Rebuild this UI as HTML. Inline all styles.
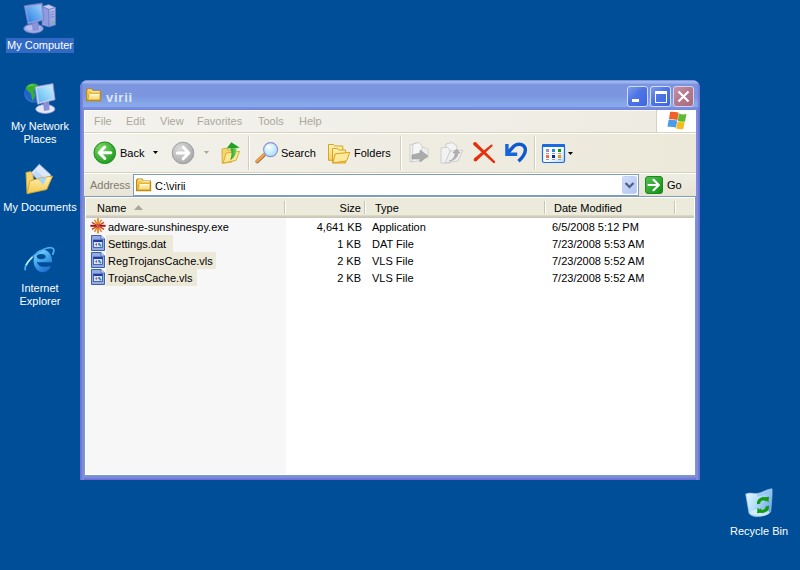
<!DOCTYPE html>
<html><head><meta charset="utf-8">
<style>
*{margin:0;padding:0;box-sizing:border-box}
html,body{width:800px;height:570px;overflow:hidden;background:#004E98;font-family:"Liberation Sans",sans-serif;font-size:11px;line-height:13px;position:relative}
.a{position:absolute}
.t{position:absolute;white-space:nowrap;font-size:11px;line-height:13px}
.dl{position:absolute;color:#fff;text-align:center;white-space:nowrap;width:80px;left:0}
svg{position:absolute;overflow:visible}
</style></head><body>

<!-- ============ desktop icons ============ -->
<!-- My Computer -->
<svg style="left:0;top:0" width="80" height="40">
  <defs>
    <linearGradient id="scr1" x1="0" y1="1" x2="1" y2="0"><stop offset="0" stop-color="#2E7EE0"/><stop offset="0.6" stop-color="#6AB0F2"/><stop offset="1" stop-color="#A8D4F8"/></linearGradient>
    <linearGradient id="twr" x1="0" y1="0" x2="0" y2="1"><stop offset="0" stop-color="#B4BEEC"/><stop offset="1" stop-color="#8E9ADC"/></linearGradient>
  </defs>
  <polygon points="42,6.5 48.5,4.5 55.5,7.5 49,9.5" fill="#C4CCF2" stroke="#6A78C8" stroke-width="0.6"/>
  <polygon points="42,6.5 49,9.5 49,27 42,25" fill="#8F9BDC" stroke="#6A78C8" stroke-width="0.6"/>
  <polygon points="49,9.5 55.5,7.5 55.5,25 49,27" fill="url(#twr)" stroke="#6A78C8" stroke-width="0.6"/>
  <path d="M50,12.5 L54.5,11.2 M50,15 L54.5,13.7 M50,17.5 L54.5,16.2" stroke="#7884CC" stroke-width="0.9"/>
  <rect x="52.8" y="21.5" width="1.6" height="1.6" fill="#3CE03C"/>
  <ellipse cx="33.5" cy="28.6" rx="9.8" ry="4.6" fill="#A0AAE4" stroke="#6E7CC8" stroke-width="0.7"/>
  <ellipse cx="33" cy="28" rx="7" ry="2.6" fill="#B8C0EE"/>
  <polygon points="32,21 38,20 38.5,29.5 33,30.5" fill="#8A94D8" stroke="#7080CC" stroke-width="0.5"/>
  <polygon points="24.2,5.8 42.2,3 43.8,20 28,24.3" fill="#94A2E2" stroke="#6876C6" stroke-width="0.7"/>
  <polygon points="26,7.3 40.8,4.9 42.2,18.8 28.7,22.4" fill="url(#scr1)"/>
</svg>
<div class="a" style="left:6px;top:38px;width:68px;height:15px;background:#316AC5"></div>
<div class="dl" style="top:39px">My Computer</div>

<!-- My Network Places -->
<svg style="left:0;top:78px" width="80" height="40">
  <defs>
    <radialGradient id="glb" cx="0.55" cy="0.45" r="0.6"><stop offset="0" stop-color="#2A6ED8"/><stop offset="0.8" stop-color="#1E5EC8"/><stop offset="1" stop-color="#5AB0F0"/></radialGradient>
    <linearGradient id="scr2" x1="0" y1="1" x2="1" y2="0"><stop offset="0" stop-color="#58B6F2"/><stop offset="1" stop-color="#C8F0FE"/></linearGradient>
  </defs>
  <circle cx="33.5" cy="15" r="9.4" fill="url(#glb)" stroke="#1A4AA0" stroke-width="0.5"/>
  <path d="M25.8,10 C27,7 30,5.6 34,5.6 C36,5.8 37.5,6.5 38,7.5 L37.5,11 C36.5,12.5 35,12.2 34,12.6 C33,13 33.5,14.5 34.5,15.5 C35.5,16.8 35,19 33.8,20.5 C33,21.5 32.8,22.5 32.5,23.5 C31.8,21 31.5,18.5 31.2,16.8 C30.8,15 29.5,14.2 28.5,13.5 C27.3,12.8 26.5,11.5 25.8,10 Z" fill="#36B030"/>
  <path d="M28,8.5 C30,7 32,6.8 34,7.2" fill="none" stroke="#8EE070" stroke-width="1" opacity="0.8"/>
  <ellipse cx="45.3" cy="31" rx="9.6" ry="4.4" fill="#E4E8F4" stroke="#A4AAD4" stroke-width="0.7"/>
  <polygon points="43,24 49,23 49.5,32 44,33" fill="#8C8ED8"/>
  <polygon points="35.1,8.8 53,5.6 55.1,21.8 37.5,26.3" fill="#CDD0F0" stroke="#9096D4" stroke-width="0.7"/>
  <polygon points="36.8,10.2 51.5,7.5 53.4,20.6 39.1,24.6" fill="url(#scr2)"/>
</svg>
<div class="dl" style="top:120px">My Network<br>Places</div>

<!-- My Documents -->
<svg style="left:0;top:160px" width="80" height="40">
  <defs>
    <linearGradient id="fld" x1="0" y1="0" x2="0" y2="1"><stop offset="0" stop-color="#FFF0B0"/><stop offset="1" stop-color="#F2C850"/></linearGradient>
  </defs>
  <polygon points="26,12.5 31,11.5 33,14 34,30 27,33" fill="#F3D372" stroke="#D8A830" stroke-width="0.8"/>
  <polygon points="39.3,4.2 50.9,15 42.5,25.3 31.6,12.6" fill="#DCE8FA" stroke="#A8C0E8" stroke-width="0.8"/>
  <polygon points="36,10 46,19 42,24 33,15" fill="#B8D0F4" opacity="0.7"/>
  <polygon points="29.8,21 40.4,18 52.6,16 46.7,29.5 27,33.7" fill="url(#fld)" stroke="#D4A428" stroke-width="0.9"/>
  <polygon points="38,19 47,17 43,25" fill="#A8D4F4"/>
</svg>
<div class="dl" style="top:201px">My Documents</div>

<!-- Internet Explorer -->
<svg style="left:0;top:240px" width="80" height="40">
  <defs>
    <linearGradient id="ie" x1="0.2" y1="0" x2="0.7" y2="1"><stop offset="0" stop-color="#8ADAFA"/><stop offset="0.45" stop-color="#44A8EE"/><stop offset="1" stop-color="#1C6ACC"/></linearGradient>
  </defs>
  <ellipse cx="42.8" cy="21" rx="9.3" ry="11.3" fill="url(#ie)"/>
  <ellipse cx="41.2" cy="16.6" rx="4.4" ry="2.7" fill="#004E98"/>
  <path d="M36.8,22.2 L53,22.2 L53,25.6 C50,26.5 46,27 42.5,26.8 C40,26.6 38,24.8 36.8,22.2 Z" fill="#004E98"/>
  <g transform="translate(39.5,19.5) rotate(-38)">
    <path d="M-17.5,0 A17.5,6.5 0 0 1 17.5,0 A17.5,6.5 0 0 1 13,4.3" fill="none" stroke="#48AEF2" stroke-width="1.8"/>
    <path d="M-14,-3.8 A17.5,6.5 0 0 1 -4,-6.3" fill="none" stroke="#C4F0FE" stroke-width="1.6"/>
  </g>
</svg>
<div class="dl" style="top:282px">Internet<br>Explorer</div>

<!-- Recycle Bin -->
<svg style="left:720px;top:484px" width="80" height="40">
  <defs>
    <linearGradient id="bin" x1="0" y1="0" x2="1" y2="0.6"><stop offset="0" stop-color="#E8FAFE"/><stop offset="0.5" stop-color="#B8E0FA"/><stop offset="1" stop-color="#6EA8E8"/></linearGradient>
  </defs>
  <path d="M25.7,10 C30,8 33,10 37,9.5 C42,9 47,5 52,4.7 C52.5,10 51.5,20 50.7,28 C47,31 41,33 36,32.7 C33,32.5 30,31 29,29.3 Z" fill="url(#bin)" stroke="#9CC4EC" stroke-width="0.6"/>
  <path d="M37,10 C42,9.5 47,6 51.5,5.5 L50.5,9 C46,10 42,12 37.5,12.5 Z" fill="#8EC0EE" opacity="0.6"/>
  <ellipse cx="40" cy="28.5" rx="9.5" ry="3.6" fill="#E0F4FE" opacity="0.75"/>
  <path d="M38.6,20 A4.6,4.6 0 0 1 46.8,16.6" fill="none" stroke="#139A13" stroke-width="3.2"/>
  <path d="M47.4,22 A4.6,4.6 0 0 1 39.2,25.4" fill="none" stroke="#139A13" stroke-width="3.2"/>
  <polygon points="44.2,13.5 49,12.8 48.4,18.6" fill="#139A13"/>
  <polygon points="41.8,28.5 37,29.2 37.6,23.4" fill="#139A13"/>
</svg>
<div class="dl" style="left:719px;top:525px">Recycle Bin</div>

<!-- ============ window ============ -->
<div class="a" style="left:80px;top:80px;width:620px;height:400px;border-radius:8px 8px 0 0;overflow:hidden;background:linear-gradient(90deg,#6F6FD5 0,#6F6FD5 1px,#7579D8 1px,#7579D8 2px,#7B8BDC 2px,#7B8BDC 3px,#7A8EDE 3px,#7A8EDE 617px,#7B8BDC 617px,#7B8BDC 618px,#7579D8 618px,#7579D8 619px,#6F6FD5 619px)">
  <!-- title bar -->
  <div class="a" style="left:0;top:0;width:620px;height:30px;background:linear-gradient(180deg,#7C93DE 0,#7C93DE 1px,#A3B8EE 1px,#98B0EA 3px,#7B96DF 4.5px,#7B96DF 16px,#84A4E8 22px,#88AAEC 26.5px,#7A8FE0 27.5px,#7385DA 30px)"></div>
  <div class="a" style="left:0;top:0;width:3px;height:30px;background:linear-gradient(90deg,#6F6FD5,#7A8EDE)"></div>
  <div class="a" style="left:617px;top:0;width:3px;height:30px;background:linear-gradient(90deg,rgba(122,142,222,0),#6F6FD5)"></div>
</div>
<div class="a" style="left:84px;top:476px;width:612px;height:4px;background:linear-gradient(180deg,#7A8EDE 0,#7A8EDE 1px,#7B8BDC 1px,#7B8BDC 2px,#7579D8 2px,#7579D8 3px,#6F6FD5 3px)"></div>
<!-- title folder -->
<svg style="left:86px;top:88px" width="16" height="15">
  <defs><linearGradient id="tf" x1="0" y1="0" x2="0" y2="1"><stop offset="0" stop-color="#FFF6C0"/><stop offset="1" stop-color="#F6D468"/></linearGradient></defs>
  <path d="M0.6,2 L1.6,1 L6,1 L7,3 L14.2,3 L14.6,4 L14.6,12.6 L0.6,12.6 Z" fill="#F2C848" stroke="#B8860E" stroke-width="1.1"/>
  <path d="M1.8,2 L5.8,2 L6.4,3.6 L13.6,3.6" fill="none" stroke="#FFF6C8" stroke-width="0.9"/>
  <path d="M3.3,6 L14,6 L14,12 L1.6,12 Z" fill="url(#tf)" stroke="#C89418" stroke-width="0.7"/>
  <path d="M3.6,6.5 L13.5,6.5" stroke="#fff" stroke-width="0.9"/>
</svg>
<div class="a" style="left:106px;top:90px;color:#DCE6F8;font-weight:bold;font-size:13px;line-height:16px;letter-spacing:0.75px">virii</div>

<!-- caption buttons -->
<div class="a" style="left:627px;top:86px;width:21px;height:21px;border:1px solid #D2DCF6;border-radius:3px;background:linear-gradient(135deg,#7C9AEC 0,#4E74E4 45%,#3E66E2 100%)"></div>
<div class="a" style="left:632px;top:99px;width:7px;height:3px;background:#fff"></div>
<div class="a" style="left:650px;top:86px;width:21px;height:21px;border:1px solid #D2DCF6;border-radius:3px;background:linear-gradient(135deg,#7C9AEC 0,#4E74E4 45%,#3E66E2 100%)"></div>
<div class="a" style="left:655px;top:91px;width:12px;height:12px;border:1px solid #fff;border-top-width:3px"></div>
<div class="a" style="left:673px;top:86px;width:21px;height:21px;border:1px solid #D8D0E8;border-radius:3px;background:linear-gradient(135deg,#C890A8 0,#B47A90 45%,#A86C82 100%)"></div>
<svg style="left:673px;top:86px" width="21" height="21"><path d="M5.5,5.5 L15.5,15.5 M15.5,5.5 L5.5,15.5" stroke="#fff" stroke-width="2.2"/></svg>

<!-- menu bar -->
<div class="a" style="left:84px;top:110px;width:572px;height:22px;background:linear-gradient(90deg,#F3F2EE,#EEECE2);border-top:1px solid #FAFAF6;border-left:1px solid #fff"></div>
<div class="a" style="left:84px;top:132px;width:612px;height:1px;background:#D8D2BD"></div>
<div class="a" style="left:656px;top:110px;width:1px;height:22px;background:#D8D2BD"></div>
<div class="a" style="left:657px;top:110px;width:39px;height:22px;background:#fff"></div>
<svg style="left:656px;top:108px" width="40" height="24">
  <path d="M14,4 C16,3.5 19,3.8 22.5,4.5 L21.5,12 C18,11.3 15.5,11 13,11.3 Z" fill="#F0602A"/>
  <path d="M22.8,5.5 C25,6.3 28,6.8 30.5,6 L29,13.5 C26.5,14.2 24,13.8 21.8,13 Z" fill="#5EBA2E"/>
  <path d="M12.6,11.8 C15,11.5 18,11.8 21.2,12.5 L20,19.5 C17,18.8 14.5,18.5 11.5,18.8 Z" fill="#4A9CE8"/>
  <path d="M21.6,13.5 C24,14.3 26.5,14.6 28.8,14 L27.2,21 C25,21.6 22.5,21.3 20.2,20.5 Z" fill="#F5BC1C"/>
</svg>
<div class="t" style="left:94px;top:115px;color:#ACA899">File</div>
<div class="t" style="left:126px;top:115px;color:#ACA899">Edit</div>
<div class="t" style="left:160px;top:115px;color:#ACA899">View</div>
<div class="t" style="left:197px;top:115px;color:#ACA899">Favorites</div>
<div class="t" style="left:258px;top:115px;color:#ACA899">Tools</div>
<div class="t" style="left:299px;top:115px;color:#ACA899">Help</div>

<!-- toolbar -->
<div class="a" style="left:84px;top:133px;width:612px;height:40px;background:linear-gradient(90deg,#F2F1EB,#ECE9DA);border-top:1px solid #fff"></div>
<div class="a" style="left:248px;top:136px;width:1px;height:34px;background:#D2CEBC"></div>
<div class="a" style="left:249px;top:136px;width:1px;height:34px;background:#fff"></div>
<div class="a" style="left:400px;top:136px;width:1px;height:34px;background:#D2CEBC"></div>
<div class="a" style="left:401px;top:136px;width:1px;height:34px;background:#fff"></div>
<div class="a" style="left:534px;top:136px;width:1px;height:34px;background:#D2CEBC"></div>
<div class="a" style="left:535px;top:136px;width:1px;height:34px;background:#fff"></div>

<!-- back -->
<svg style="left:93px;top:141px" width="24" height="24">
  <defs><radialGradient id="gb" cx="0.35" cy="0.3" r="0.8"><stop offset="0" stop-color="#84D868"/><stop offset="0.6" stop-color="#40B038"/><stop offset="1" stop-color="#1A9A1A"/></radialGradient></defs>
  <circle cx="11.75" cy="11.75" r="10.8" fill="url(#gb)" stroke="#1E8E1E" stroke-width="1"/>
  <path d="M11.8,6 L6.2,11.75 L11.8,17.5 M7,11.75 L17.8,11.75" fill="none" stroke="#fff" stroke-width="3" stroke-linecap="round" stroke-linejoin="round"/>
</svg>
<div class="t" style="left:120px;top:147px">Back</div>
<svg style="left:153px;top:151px" width="5" height="3"><path d="M0,0 H5 L2.5,3 Z" fill="#000"/></svg>
<!-- forward -->
<svg style="left:171px;top:141px" width="24" height="24">
  <defs><radialGradient id="gg" cx="0.35" cy="0.3" r="0.75"><stop offset="0" stop-color="#DADADA"/><stop offset="1" stop-color="#A8A8A8"/></radialGradient></defs>
  <circle cx="12" cy="12" r="10.8" fill="url(#gg)" stroke="#A0A0A0" stroke-width="1"/>
  <path d="M12.2,6.2 L17.8,12 L12.2,17.8 M17,12 L6.2,12" fill="none" stroke="#fff" stroke-width="3" stroke-linecap="round" stroke-linejoin="round"/>
</svg>
<svg style="left:204px;top:151px" width="5" height="3"><path d="M0,0 H5 L2.5,3 Z" fill="#ACA899"/></svg>
<!-- up -->
<svg style="left:220px;top:141px" width="22" height="24">
  <defs><linearGradient id="upg" x1="0" y1="0" x2="1" y2="0"><stop offset="0" stop-color="#1E9A1E"/><stop offset="1" stop-color="#7ADC5A"/></linearGradient></defs>
  <path d="M2,8 L6.5,7.2 L8,9 L12,9 L12,21 L2.2,22.3 Z" fill="#F4D670" stroke="#D8A828" stroke-width="0.9"/>
  <path d="M6,12 L19.6,10.4 L16,19.4 L3.2,22 Z" fill="#FBE69A" stroke="#D8A828" stroke-width="0.9"/>
  <path d="M10.5,7.2 L16.6,7.2 C16.6,12.5 14.5,16.5 10.2,19.2 C11.6,15 12.2,11 10.5,7.2 Z" fill="url(#upg)"/>
  <polygon points="6.6,7.4 11.3,1.2 19.8,6.8" fill="#22A022"/>
</svg>
<!-- search -->
<svg style="left:254px;top:141px" width="26" height="24">
  <defs><radialGradient id="lens" cx="0.4" cy="0.35" r="0.7"><stop offset="0" stop-color="#F4FCFF"/><stop offset="0.5" stop-color="#CDEEFE"/><stop offset="1" stop-color="#A6D8F8"/></radialGradient></defs>
  <line x1="3.2" y1="20.5" x2="9.8" y2="14.2" stroke="#7A5A3A" stroke-width="3.6" stroke-linecap="round"/>
  <line x1="3" y1="20.2" x2="9.6" y2="14" stroke="#F0A048" stroke-width="2.8" stroke-linecap="round"/>
  <circle cx="16.6" cy="8.6" r="7" fill="url(#lens)" stroke="#8A90CC" stroke-width="1.1"/>
  <circle cx="14" cy="6" r="1.6" fill="#fff" opacity="0.8"/>
</svg>
<div class="t" style="left:281px;top:147px">Search</div>
<!-- folders -->
<svg style="left:327px;top:142px" width="24" height="24">
  <defs><linearGradient id="fg2" x1="0" y1="0" x2="0" y2="1"><stop offset="0" stop-color="#FFF4B8"/><stop offset="1" stop-color="#F4D060"/></linearGradient></defs>
  <path d="M1.5,2.5 L6.5,2.5 L7.5,4 L15.8,4 L15.8,18.3 L1.5,18.3 Z" fill="url(#fg2)" stroke="#D8A420" stroke-width="1"/>
  <path d="M5.5,6.5 L10.5,6.5 L11.5,8 L18.6,8 L18.6,21 L5.5,21 Z" fill="url(#fg2)" stroke="#D8A420" stroke-width="1"/>
  <path d="M8.3,11.8 L22.8,10.4 L19.6,18.8 L5.8,21 Z" fill="#FDEA9C" stroke="#D8A420" stroke-width="1"/>
</svg>
<div class="t" style="left:354px;top:147px">Folders</div>
<!-- move to -->
<svg style="left:408px;top:141px" width="24" height="24">
  <path d="M2,4 L8,2 L13,5 L13,18 L2,21 Z" fill="#F2F2F2" stroke="#C8C8C8" stroke-width="0.9"/>
  <path d="M5,3 L11,1.5 L15,6 L15,19 L4,21 Z" fill="#F6F6F6" stroke="#C8C8C8" stroke-width="0.9"/>
  <path d="M14,6 L20,8 L20,17 L14,17 Z" fill="#EEE" stroke="#CCC" stroke-width="0.8"/>
  <path d="M4,14 L12,12 L12,9 L20,15 L12,21 L12,18 L4,18 Z" fill="#ABABAB" stroke="#999" stroke-width="0.6"/>
</svg>
<!-- copy to -->
<svg style="left:440px;top:141px" width="24" height="24">
  <path d="M6,3 L12,1.5 L17,5 L17,19 L6,21 Z" fill="#F4F4F4" stroke="#C8C8C8" stroke-width="0.9"/>
  <path d="M1,7 L7,6 L10,9 L10,22 L1,22 Z" fill="#F2F2F2" stroke="#C8C8C8" stroke-width="0.9"/>
  <path d="M10,10 L23,9 L18,20 L5,22 Z" fill="#EFEFEF" stroke="#C8C8C8" stroke-width="0.9"/>
  <path d="M9,20 C13,19 15,16 15,12 L13,12 L16.5,8 L20,12 L18,12 C18,16 14,20 9,20 Z" fill="#B0B0B0" stroke="#9A9A9A" stroke-width="0.5"/>
</svg>
<!-- delete -->
<svg style="left:472px;top:141px" width="24" height="24">
  <g fill="#E4300C">
    <polygon points="4.15,1.4 22.86,20.31 21.34,21.89 1.65,4.0"/><circle cx="2.9" cy="2.7" r="1.8"/><circle cx="22.1" cy="21.1" r="1.1"/>
    <polygon points="2.21,17.35 18.94,3.65 20.26,5.15 4.59,20.05"/><circle cx="3.4" cy="18.7" r="1.8"/><circle cx="19.6" cy="4.4" r="1"/>
  </g>
</svg>
<!-- undo -->
<svg style="left:504px;top:141px" width="24" height="24">
  <path d="M14.5,20.3 C19.5,15.5 22.5,11 21,6.8 C19.5,3 14,2 10,5 L4,11.5" fill="none" stroke="#0E58D0" stroke-width="3.4"/>
  <path d="M2.9,2.9 V13.2 H13.2" fill="none" stroke="#1466DC" stroke-width="3.4" stroke-linejoin="miter"/>
</svg>
<!-- views -->
<svg style="left:541px;top:143px" width="26" height="22">
  <defs><linearGradient id="vw" x1="0" y1="0" x2="1" y2="1"><stop offset="0" stop-color="#fff"/><stop offset="0.6" stop-color="#F4F8FE"/><stop offset="1" stop-color="#B8D4F6"/></linearGradient></defs>
  <rect x="1.5" y="1.5" width="22" height="18" rx="1.5" fill="url(#vw)" stroke="#1A6AE0" stroke-width="1.2"/>
  <rect x="1" y="1" width="23" height="3" rx="1.2" fill="#1A6AE0"/>
  <rect x="5" y="6" width="3" height="3" fill="#9A90D0"/><rect x="11" y="6" width="3" height="3" fill="#1E88EC"/><rect x="17" y="6" width="3" height="3" fill="#0E9A0E"/>
  <rect x="5" y="12" width="3" height="3" fill="#F86A38"/><rect x="11" y="12" width="3" height="3" fill="#0C2C8C"/><rect x="17" y="12" width="3" height="3" fill="#E09C10"/>
  <rect x="5" y="10" width="3" height="1" fill="#A0A0A0"/><rect x="11" y="10" width="3" height="1" fill="#A0A0A0"/><rect x="17" y="10" width="3" height="1" fill="#A0A0A0"/>
  <rect x="5" y="16" width="3" height="1" fill="#A0A0A0"/><rect x="11" y="16" width="3" height="1" fill="#A0A0A0"/><rect x="17" y="16" width="3" height="1" fill="#A0A0A0"/>
</svg>
<svg style="left:568px;top:152px" width="5" height="3"><path d="M0,0 H5 L2.5,3 Z" fill="#000"/></svg>

<!-- address bar -->
<div class="a" style="left:84px;top:172px;width:612px;height:1px;background:#D8D2BD"></div>
<div class="a" style="left:84px;top:173px;width:612px;height:1px;background:#fff"></div>
<div class="a" style="left:84px;top:174px;width:612px;height:22px;background:linear-gradient(180deg,#EEEDE3,#E8E5D6)"></div>
<div class="t" style="left:90px;top:179px;color:#807C6E">Address</div>
<div class="a" style="left:133px;top:174px;width:506px;height:22px;background:#fff;border:1px solid #7F9DB9"></div>
<svg style="left:136px;top:178px" width="16" height="15">
  <path d="M0.6,2 L1.6,1 L6,1 L7,3 L14.2,3 L14.6,4 L14.6,12.6 L0.6,12.6 Z" fill="#F2C848" stroke="#B8860E" stroke-width="1.1"/>
  <path d="M1.8,2 L5.8,2 L6.4,3.6 L13.6,3.6" fill="none" stroke="#FFF6C8" stroke-width="0.9"/>
  <path d="M3.3,6 L14,6 L14,12 L1.6,12 Z" fill="url(#tf)" stroke="#C89418" stroke-width="0.7"/>
  <path d="M3.6,6.5 L13.5,6.5" stroke="#fff" stroke-width="0.9"/>
</svg>
<div class="t" style="left:155px;top:180px">C:\virii</div>
<div class="a" style="left:622px;top:176px;width:15px;height:18px;border-radius:2px;background:linear-gradient(135deg,#D2DEFA,#B2C6F4);border:1px solid #C4D2F4"></div>
<svg style="left:622px;top:176px" width="15" height="18"><path d="M3.5,7 L7.5,11 L11.5,7" fill="none" stroke="#4D6185" stroke-width="2.2"/></svg>
<svg style="left:645px;top:176px" width="18" height="18">
  <defs><linearGradient id="go" x1="0" y1="0" x2="1" y2="1"><stop offset="0" stop-color="#58C058"/><stop offset="1" stop-color="#0E8E0E"/></linearGradient></defs>
  <rect x="0.5" y="0.5" width="17" height="17" rx="2.5" fill="url(#go)" stroke="#1A8A1A" stroke-width="1"/>
  <path d="M3.5,9 L13.5,9 M8.5,3.8 L13.8,9 L8.5,14.2" fill="none" stroke="#fff" stroke-width="2.2" stroke-linecap="round" stroke-linejoin="round"/>
</svg>
<div class="t" style="left:667px;top:179px">Go</div>

<!-- list view -->
<div class="a" style="left:84px;top:196px;width:612px;height:280px;background:#fff;border:1px solid #7F9DB9"></div>
<div class="a" style="left:86px;top:218px;width:200px;height:256px;background:#F7F7F7"></div>
<!-- header -->
<div class="a" style="left:86px;top:198px;width:608px;height:20px;background:linear-gradient(180deg,#EBEADB 0,#EBEADB 17px,#E2DECD 17px,#D6D2C2 18px,#CBC7B8 19px)"></div>
<div class="a" style="left:284px;top:201px;width:1px;height:13px;background:#C7C5B2"></div><div class="a" style="left:285px;top:201px;width:1px;height:13px;background:#fff"></div>
<div class="a" style="left:364px;top:201px;width:1px;height:13px;background:#C7C5B2"></div><div class="a" style="left:365px;top:201px;width:1px;height:13px;background:#fff"></div>
<div class="a" style="left:544px;top:201px;width:1px;height:13px;background:#C7C5B2"></div><div class="a" style="left:545px;top:201px;width:1px;height:13px;background:#fff"></div>
<div class="a" style="left:674px;top:201px;width:1px;height:13px;background:#C7C5B2"></div><div class="a" style="left:675px;top:201px;width:1px;height:13px;background:#fff"></div>
<div class="t" style="left:97px;top:202px">Name</div>
<svg style="left:134px;top:205px" width="9" height="5"><path d="M0,5 L4.5,0 L9,5 Z" fill="#ACA899"/></svg>
<div class="t" style="left:301px;top:202px;width:60px;text-align:right">Size</div>
<div class="t" style="left:375px;top:202px">Type</div>
<div class="t" style="left:554px;top:202px">Date Modified</div>

<!-- rows -->
<svg style="left:89px;top:218px" width="18" height="17">
  <path d="M9.00,15.40 L9.00,0.20" stroke="#F08A1E" stroke-width="1.9"/>
  <path d="M5.50,13.86 L12.50,1.74" stroke="#E67A22" stroke-width="1.4"/>
  <path d="M2.94,11.30 L15.06,4.30" stroke="#C44A18" stroke-width="1.4"/>
  <path d="M1.40,7.80 L16.60,7.80" stroke="#A80C10" stroke-width="1.9"/>
  <path d="M2.94,4.30 L15.06,11.30" stroke="#C44A18" stroke-width="1.4"/>
  <path d="M5.50,1.74 L12.50,13.86" stroke="#E67A22" stroke-width="1.4"/>
  <circle cx="9" cy="7.8" r="1.9" fill="#C85050"/>
</svg>
<div class="t" style="left:108px;top:221px">adware-sunshinespy.exe</div>
<div class="t" style="left:302px;top:221px;width:60px;text-align:right">4,641 KB</div>
<div class="t" style="left:372px;top:221px">Application</div>
<div class="t" style="left:552px;top:221px">6/5/2008 5:12 PM</div>

<div class="a" style="left:106px;top:235px;width:67px;height:17px;background:#ECE9D8"></div>
<div class="a" style="left:106px;top:252px;width:110px;height:17px;background:#ECE9D8"></div>
<div class="a" style="left:106px;top:269px;width:91px;height:17px;background:#ECE9D8"></div>

<svg style="left:90px;top:235px" width="16" height="16" id="fi1">
  <path d="M1.5,0.5 L11,0.5 L14.5,4 L14.5,15.5 L1.5,15.5 Z" fill="#94ACE2" stroke="#3E5EAE" stroke-width="1"/>
  <path d="M11,0.5 L11,4 L14.5,4" fill="#DDE6F8" stroke="#3E5EAE" stroke-width="0.8"/>
  <rect x="3.5" y="5" width="9" height="7.5" fill="#D4E0F6" stroke="#3050A0" stroke-width="0.8"/>
  <rect x="3.5" y="5" width="9" height="2" fill="#1E3C9E"/>
  <path d="M5,9.5 L7,8 L7,11 Z" fill="#C83C6C"/><circle cx="9.2" cy="9.2" r="1.1" fill="#1E78E0"/><circle cx="10.4" cy="10.5" r="1" fill="#18A050"/>
</svg>
<svg style="left:90px;top:252px" width="16" height="16">
  <path d="M1.5,0.5 L11,0.5 L14.5,4 L14.5,15.5 L1.5,15.5 Z" fill="#94ACE2" stroke="#3E5EAE" stroke-width="1"/>
  <path d="M11,0.5 L11,4 L14.5,4" fill="#DDE6F8" stroke="#3E5EAE" stroke-width="0.8"/>
  <rect x="3.5" y="5" width="9" height="7.5" fill="#D4E0F6" stroke="#3050A0" stroke-width="0.8"/>
  <rect x="3.5" y="5" width="9" height="2" fill="#1E3C9E"/>
  <path d="M5,9.5 L7,8 L7,11 Z" fill="#C83C6C"/><circle cx="9.2" cy="9.2" r="1.1" fill="#1E78E0"/><circle cx="10.4" cy="10.5" r="1" fill="#18A050"/>
</svg>
<svg style="left:90px;top:269px" width="16" height="16">
  <path d="M1.5,0.5 L11,0.5 L14.5,4 L14.5,15.5 L1.5,15.5 Z" fill="#94ACE2" stroke="#3E5EAE" stroke-width="1"/>
  <path d="M11,0.5 L11,4 L14.5,4" fill="#DDE6F8" stroke="#3E5EAE" stroke-width="0.8"/>
  <rect x="3.5" y="5" width="9" height="7.5" fill="#D4E0F6" stroke="#3050A0" stroke-width="0.8"/>
  <rect x="3.5" y="5" width="9" height="2" fill="#1E3C9E"/>
  <path d="M5,9.5 L7,8 L7,11 Z" fill="#C83C6C"/><circle cx="9.2" cy="9.2" r="1.1" fill="#1E78E0"/><circle cx="10.4" cy="10.5" r="1" fill="#18A050"/>
</svg>

<div class="t" style="left:108px;top:238px">Settings.dat</div>
<div class="t" style="left:301px;top:238px;width:60px;text-align:right">1 KB</div>
<div class="t" style="left:372px;top:238px">DAT File</div>
<div class="t" style="left:552px;top:238px">7/23/2008 5:53 AM</div>

<div class="t" style="left:108px;top:255px">RegTrojansCache.vls</div>
<div class="t" style="left:301px;top:255px;width:60px;text-align:right">2 KB</div>
<div class="t" style="left:372px;top:255px">VLS File</div>
<div class="t" style="left:552px;top:255px">7/23/2008 5:52 AM</div>

<div class="t" style="left:108px;top:272px">TrojansCache.vls</div>
<div class="t" style="left:301px;top:272px;width:60px;text-align:right">2 KB</div>
<div class="t" style="left:372px;top:272px">VLS File</div>
<div class="t" style="left:552px;top:272px">7/23/2008 5:52 AM</div>

</body></html>
